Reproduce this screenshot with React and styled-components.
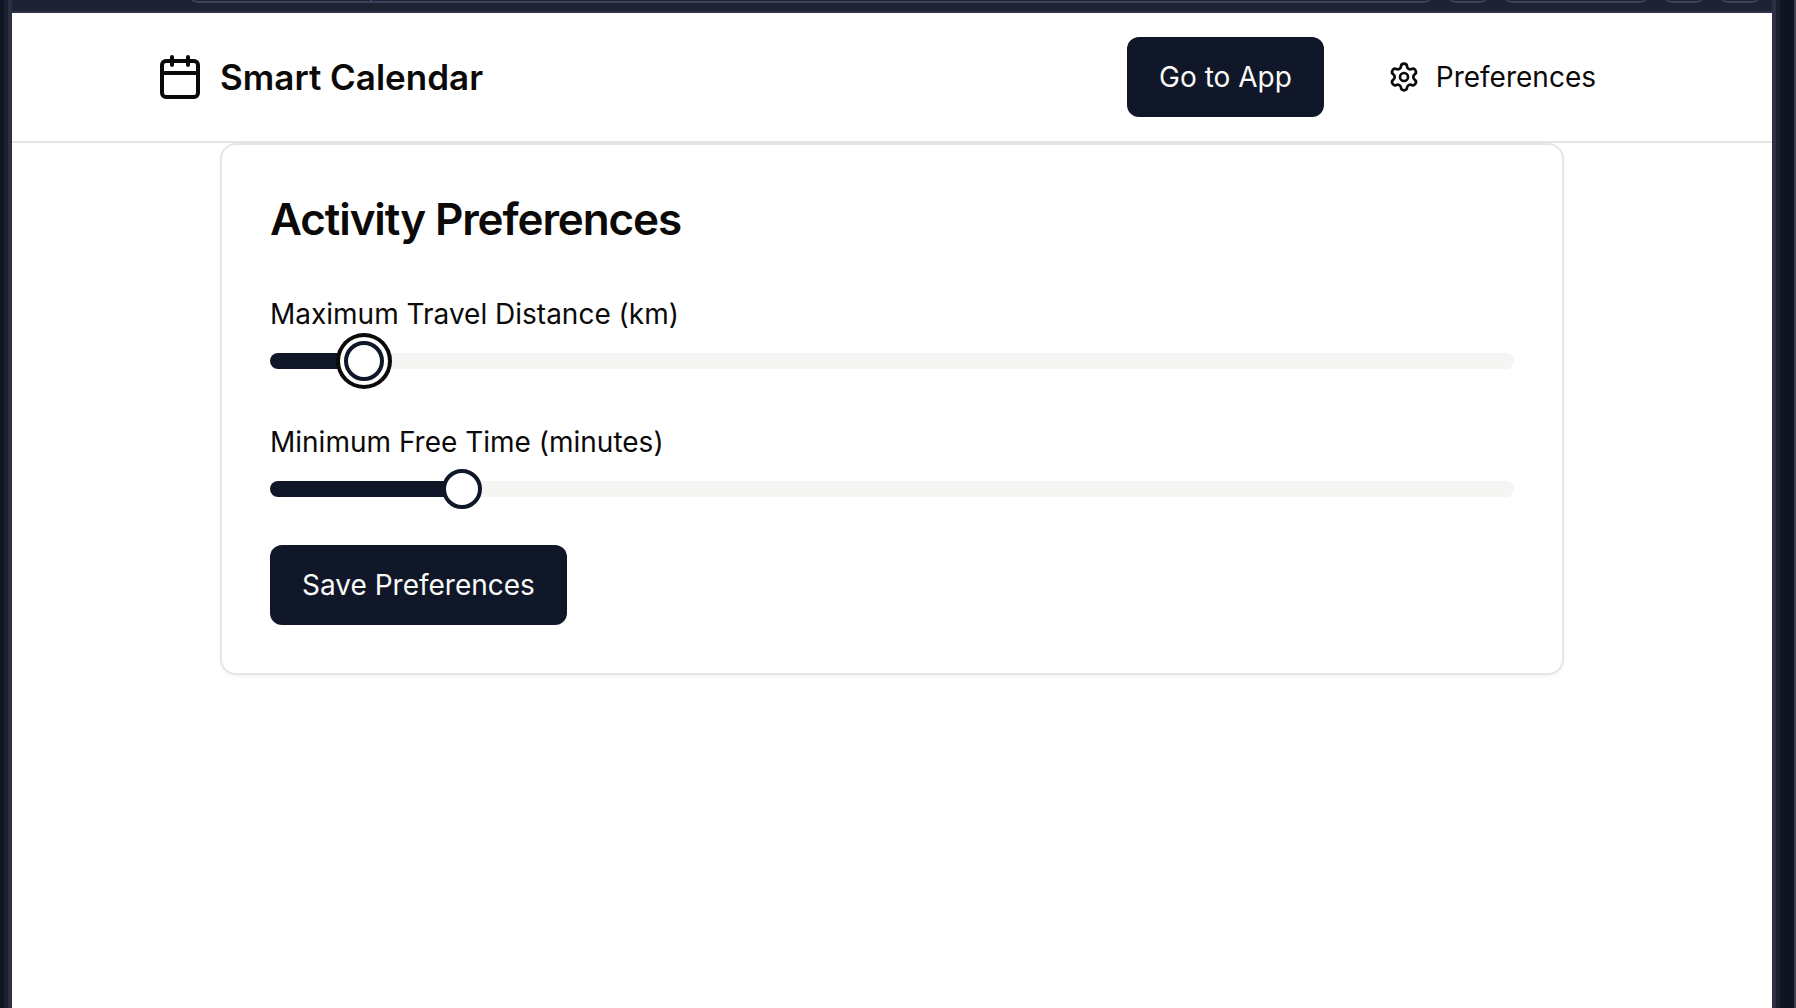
import React, { useState } from "react";
import styled, { createGlobalStyle } from "styled-components";
import { Calendar, Settings } from "lucide-react";

const GlobalStyle = createGlobalStyle`
  *, *::before, *::after { box-sizing: border-box; }
  body {
    margin: 0;
    background: #0e1422;
    color: #0c0a09;
    font-family: Inter, "Liberation Sans", sans-serif;
    font-size: 32px;
    line-height: 48px;
    -webkit-font-smoothing: antialiased;
  }
`;

const Desktop = styled.div`
  display: flex;
  min-height: 100vh;
  padding-left: 4px;
  padding-right: 14px;
  background: #0e1422;
  border-right: 2px solid #3d3d4b;
`;

const Window = styled.div`
  flex: 1;
  display: flex;
  border: solid #1c1f2d;
  border-width: 0 4px;
`;

const Viewport = styled.div`
  flex: 1;
  display: flex;
  flex-direction: column;
  border: solid #2d3045;
  border-width: 0 4px;
`;

const Toolbar = styled.div`
  display: flex;
  align-items: flex-end;
  gap: 12px;
  height: 13px;
  padding: 0 10px 8px 176px;
  overflow: hidden;
  background: #1e2333;
  border-bottom: 2px solid #2f3146;
`;

const ToolbarSlot = styled.div`
  display: flex;
  flex: ${(p) => (p.$width ? "none" : "1")};
  width: ${(p) => (p.$width ? `${p.$width}px` : "auto")};
  height: 40px;
  border: 2px solid #3e4159;
  border-radius: 10px;
`;

const AddressLead = styled.div`
  width: 182px;
  border-right: 2px solid #3e4159;
`;

const Page = styled.div`
  flex: 1;
  background: #ffffff;
`;

const Header = styled.header`
  border-bottom: 2px solid #e5e5e5;
`;

const Nav = styled.nav`
  display: flex;
  align-items: center;
  justify-content: space-between;
  max-width: 1536px;
  height: 128px;
  margin: 0 auto;
  padding: 0 32px;
`;

const Brand = styled.div`
  display: flex;
  align-items: center;
  gap: 16px;
  font-size: 35px;
  font-weight: 600;
  line-height: 56px;
`;

const Actions = styled.div`
  display: flex;
  align-items: center;
  gap: 32px;
`;

const Button = styled.button`
  display: inline-flex;
  align-items: center;
  justify-content: center;
  gap: 16px;
  height: 80px;
  padding: 0 32px;
  border: 0;
  border-radius: 12px;
  background: ${(p) => (p.$ghost ? "transparent" : "#101728")};
  color: ${(p) => (p.$ghost ? "#0c0a09" : "#fafaf9")};
  font: inherit;
  font-size: 28px;
  font-weight: 400;
  line-height: 40px;
  white-space: nowrap;
  cursor: pointer;
`;

const Card = styled.main`
  max-width: 1344px;
  margin: 0 auto;
  padding: 48px;
  border: 2px solid #e5e5e5;
  border-radius: 16px;
  box-shadow: 0 2px 4px rgba(0, 0, 0, 0.05);
`;

const Title = styled.h1`
  margin: 0 0 44px;
  font-size: 44px;
  font-weight: 600;
  line-height: 52px;
  letter-spacing: -0.025em;
`;

const Form = styled.form`
  display: flex;
  flex-direction: column;
  align-items: flex-start;
  gap: 48px;
`;

const Field = styled.div`
  display: flex;
  flex-direction: column;
  gap: 16px;
  width: 100%;
`;

const LabelLine = styled.div`
  height: 48px;
`;

const Label = styled.label`
  font-size: 28px;
  font-weight: 400;
`;

const Slider = styled.input`
  appearance: none;
  display: block;
  width: 100%;
  height: 16px;
  margin: 0;
  border-radius: 8px;
  outline: none;
  background: linear-gradient(
    to right,
    #101728 calc(20px + (100% - 40px) * var(--filled)),
    #f5f5f4 calc(20px + (100% - 40px) * var(--filled))
  );
  cursor: pointer;

  &::-webkit-slider-runnable-track {
    height: 16px;
  }

  &::-webkit-slider-thumb {
    appearance: none;
    width: 40px;
    height: 40px;
    margin-top: -12px;
    border: 4px solid #101728;
    border-radius: 50%;
    background: #ffffff;
  }

  &:focus-visible::-webkit-slider-thumb {
    box-shadow: 0 0 0 4px #ffffff, 0 0 0 8px #0c0a09;
  }
`;

function SliderField({ id, label, min, max, initial, autoFocus }) {
  const [value, setValue] = useState(initial);
  return (
    <Field>
      <LabelLine>
        <Label htmlFor={id}>{label}</Label>
      </LabelLine>
      <Slider
        id={id}
        type="range"
        min={min}
        max={max}
        value={value}
        autoFocus={autoFocus}
        onChange={(e) => setValue(Number(e.target.value))}
        style={{ "--filled": (value - min) / (max - min) }}
      />
    </Field>
  );
}

export default function App() {
  return (
    <>
      <GlobalStyle />
      <Desktop>
        <Window>
          <Viewport>
            <Toolbar>
              <ToolbarSlot>
                <AddressLead />
              </ToolbarSlot>
              <ToolbarSlot $width={44} />
              <ToolbarSlot $width={148} />
              <ToolbarSlot $width={44} />
              <ToolbarSlot $width={44} />
            </Toolbar>
            <Page>
              <Header>
                <Nav>
                  <Brand>
                    <Calendar size={48} aria-hidden="true" />
                    Smart Calendar
                  </Brand>
                  <Actions>
                    <Button type="button">Go to App</Button>
                    <Button type="button" $ghost>
                      <Settings size={32} aria-hidden="true" />
                      Preferences
                    </Button>
                  </Actions>
                </Nav>
              </Header>
              <Card>
                <Title>Activity Preferences</Title>
                <Form onSubmit={(e) => e.preventDefault()}>
                  <SliderField
                    id="distance"
                    label="Maximum Travel Distance (km)"
                    min={1}
                    max={50}
                    initial={4}
                    autoFocus
                  />
                  <SliderField
                    id="free-time"
                    label="Minimum Free Time (minutes)"
                    min={15}
                    max={120}
                    initial={30}
                  />
                  <Button type="submit">Save Preferences</Button>
                </Form>
              </Card>
            </Page>
          </Viewport>
        </Window>
      </Desktop>
    </>
  );
}
